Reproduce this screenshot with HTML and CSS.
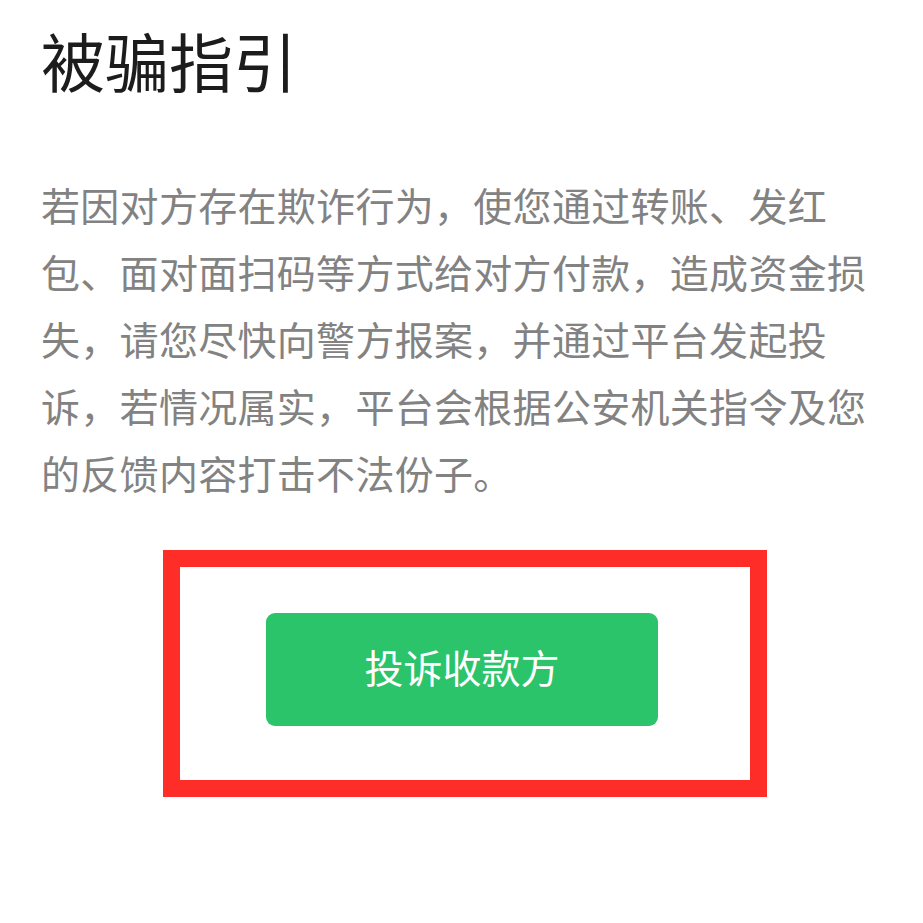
FILE: index.html
```html
<!DOCTYPE html>
<html lang="zh-CN">
<head>
<meta charset="utf-8">
<link rel="stylesheet" href="styles.css">
</head>
<body>
<main class="page">
  <h1 class="title">被骗指引</h1>
  <p class="desc">若因对方存在欺诈行为，使您通过转账、发红包、面对面扫码等方式给对方付款，造成资金损失，请您尽快向警方报案，并通过平台发起投诉，若情况属实，平台会根据公安机关指令及您的反馈内容打击不法份子。</p>
  <div class="highlight">
    <button class="btn" type="button">投诉收款方</button>
  </div>
</main>
</body>
</html>
```
FILE: styles.css
```css
html, body {
  margin: 0;
  padding: 0;
  background: #ffffff;
}
.page {
  width: 923px;
  height: 923px;
  box-sizing: border-box;
  padding: 0 41px;
  font-family: "Noto Sans CJK SC", "Noto Sans", sans-serif;
  overflow: hidden;
}
.title {
  margin: 21px 0 0 0;
  font-size: 64px;
  line-height: 76px;
  font-weight: 400;
  color: #1c1c1c;
}
.desc {
  margin: 74px 0 0 0;
  font-size: 39px;
  letter-spacing: 0.3px;
  line-height: 67px;
  color: #828282;
  width: 840px;
}
.highlight {
  margin: 44px 0 0 122px;
  width: 604px;
  height: 247px;
  box-sizing: border-box;
  border: 17px solid #fe2d28;
  padding: 46px 92px 0 86px;
}
.btn {
  display: flex;
  align-items: center;
  justify-content: center;
  width: 392px;
  height: 113px;
  border: none;
  border-radius: 9px;
  background: #2bc46a;
  color: #ffffff;
  font-family: "Noto Sans CJK SC", "Noto Sans", sans-serif;
  font-size: 39px;
  padding: 0 0 8px 0;
  box-sizing: border-box;
}
```
